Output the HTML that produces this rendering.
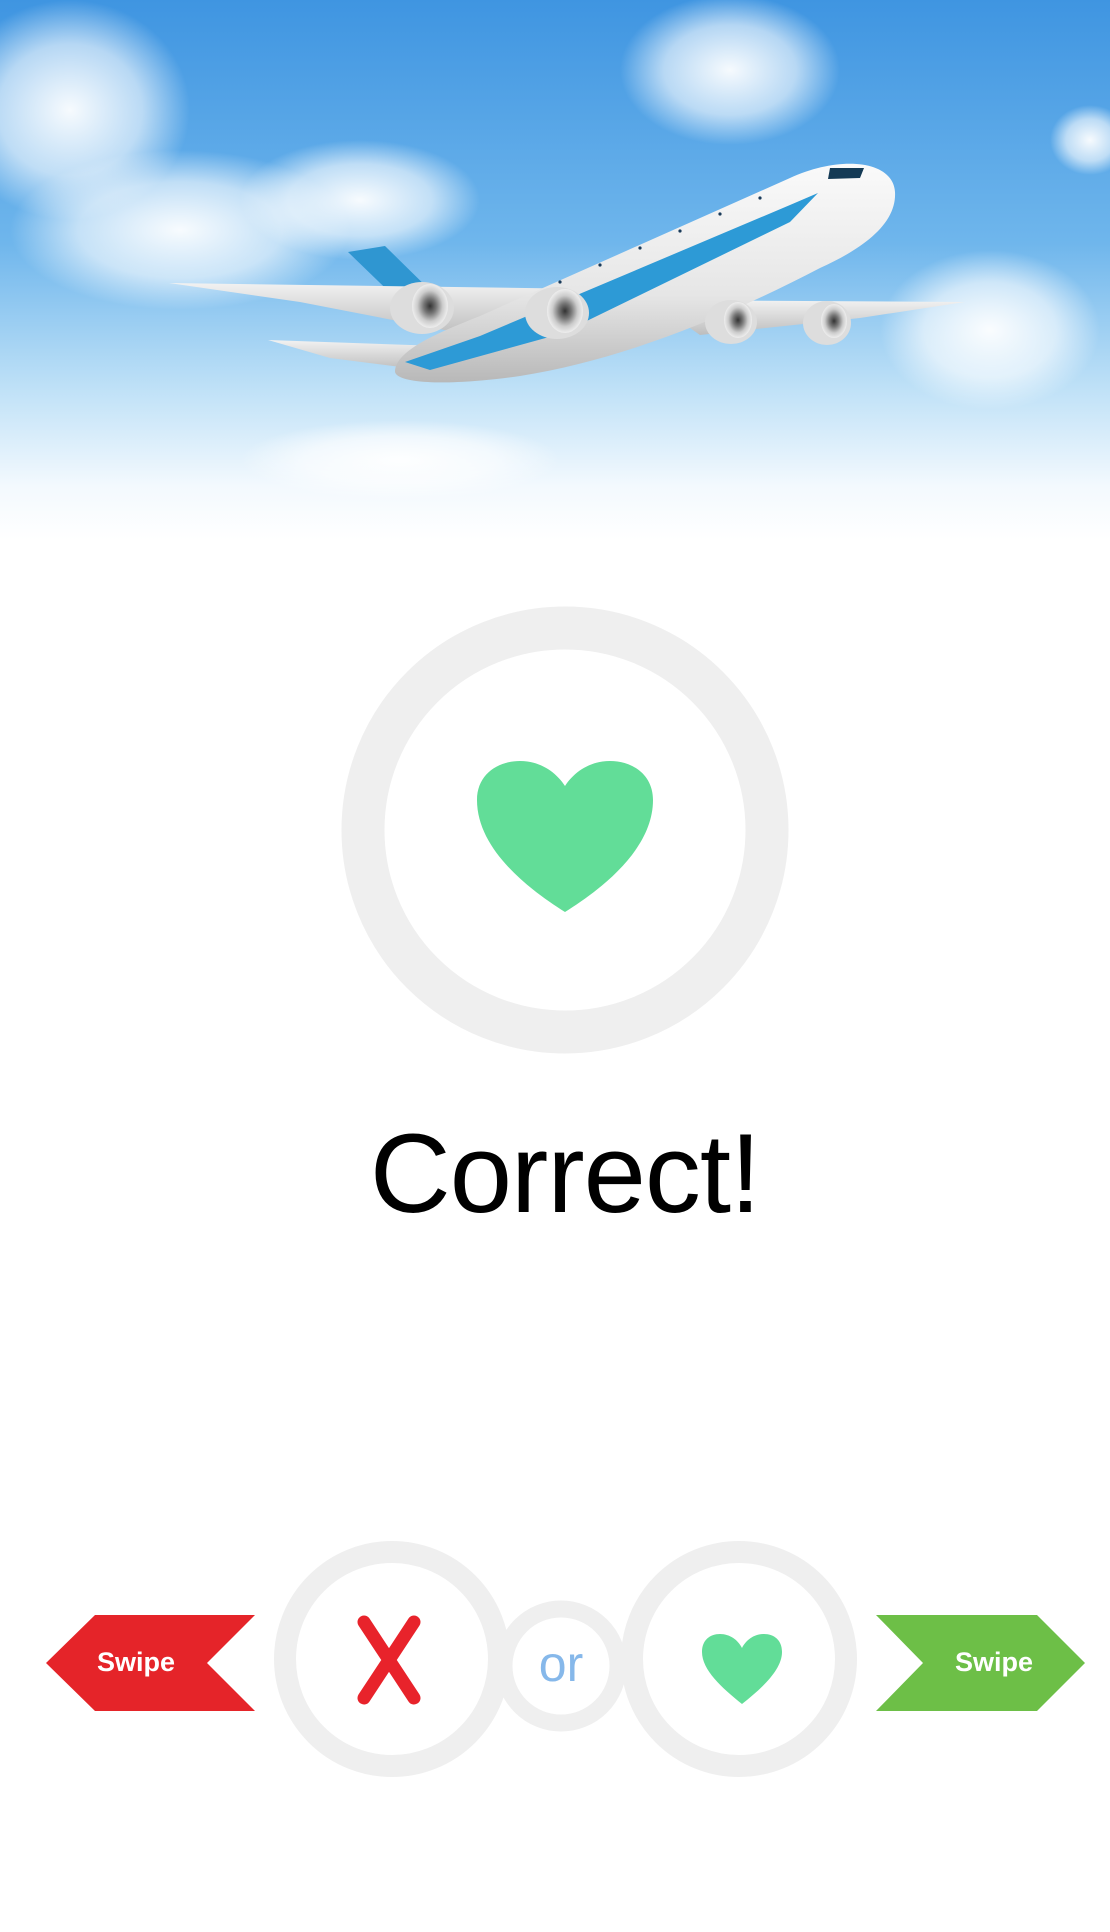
<!DOCTYPE html>
<html><head><meta charset="utf-8"><style>
html,body{margin:0;padding:0;background:#fff;}
body{width:1110px;height:1932px;position:relative;overflow:hidden;font-family:"Liberation Sans",sans-serif;}
svg{position:absolute;left:0;top:0;}
</style></head><body>
<svg width="1110" height="1932" viewBox="0 0 1110 1932">
<defs>
<linearGradient id="sky" x1="0" y1="0" x2="0" y2="1">
<stop offset="0" stop-color="#3f95e1"/>
<stop offset="0.45" stop-color="#6fb6ec"/>
<stop offset="0.72" stop-color="#bfe1f7"/>
<stop offset="0.9" stop-color="#f3f9fe"/>
<stop offset="1" stop-color="#ffffff"/>
</linearGradient>
<radialGradient id="cl"><stop offset="0" stop-color="#fff" stop-opacity="0.95"/><stop offset="0.6" stop-color="#fff" stop-opacity="0.6"/><stop offset="1" stop-color="#fff" stop-opacity="0"/></radialGradient>
<linearGradient id="fus" x1="0" y1="0" x2="0" y2="1"><stop offset="0" stop-color="#fafafa"/><stop offset="0.6" stop-color="#e6e6e6"/><stop offset="1" stop-color="#b8b8b8"/></linearGradient>
<linearGradient id="wing" x1="0" y1="0" x2="0" y2="1"><stop offset="0" stop-color="#f2f2f2"/><stop offset="1" stop-color="#bdbdbd"/></linearGradient>
<radialGradient id="eng"><stop offset="0" stop-color="#333"/><stop offset="0.35" stop-color="#777"/><stop offset="0.7" stop-color="#ccc"/><stop offset="1" stop-color="#eee"/></radialGradient>
</defs>
<rect x="0" y="0" width="1110" height="540" fill="url(#sky)"/>
<ellipse cx="70" cy="110" rx="120" ry="110" fill="url(#cl)"/>
<ellipse cx="180" cy="230" rx="170" ry="80" fill="url(#cl)"/>
<ellipse cx="360" cy="200" rx="120" ry="60" fill="url(#cl)"/>
<ellipse cx="730" cy="70" rx="110" ry="75" fill="url(#cl)"/>
<ellipse cx="990" cy="330" rx="110" ry="80" fill="url(#cl)"/>
<ellipse cx="1090" cy="140" rx="40" ry="35" fill="url(#cl)"/>
<ellipse cx="400" cy="460" rx="160" ry="40" fill="url(#cl)"/>
<!-- plane -->
<path d="M348 252 L385 246 L440 300 L410 312 Z" fill="#2f96d1"/>
<path d="M169 283 L665 290 L662 315 L470 335 L300 302 Z" fill="url(#wing)"/>
<path d="M650 300 L965 302 L860 318 L700 335 Z" fill="url(#wing)"/>
<path d="M268 340 L440 346 L425 370 L330 358 Z" fill="url(#wing)"/>
<path d="M395 372 C395 350 440 332 480 316 L790 178 C840 155 893 160 895 192 C897 225 860 250 820 268 C720 320 620 360 520 376 C450 386 398 384 395 372 Z" fill="url(#fus)"/>
<path d="M405 362 L480 336 L790 205 L818 193 L790 222 L560 334 L430 370 Z" fill="#2d9ad6"/>
<path d="M830 168 L864 168 L860 178 L828 179 Z" fill="#143a55"/>
<g fill="#1a3b5a"><circle cx="560" cy="282" r="1.6"/><circle cx="600" cy="265" r="1.6"/><circle cx="640" cy="248" r="1.6"/><circle cx="680" cy="231" r="1.6"/><circle cx="720" cy="214" r="1.6"/><circle cx="760" cy="198" r="1.6"/></g>
<ellipse cx="422" cy="308" rx="32" ry="26" fill="#ddd"/><ellipse cx="430" cy="306" rx="18" ry="22" fill="url(#eng)"/>
<ellipse cx="557" cy="313" rx="32" ry="26" fill="#ddd"/><ellipse cx="565" cy="311" rx="18" ry="22" fill="url(#eng)"/>
<ellipse cx="731" cy="322" rx="26" ry="22" fill="#ddd"/><ellipse cx="738" cy="320" rx="14" ry="18" fill="url(#eng)"/>
<ellipse cx="827" cy="323" rx="24" ry="22" fill="#ddd"/><ellipse cx="834" cy="321" rx="13" ry="17" fill="url(#eng)"/>
<circle cx="565" cy="830" r="202" fill="#fff" stroke="#efefef" stroke-width="43"/>
<path d="M565 912 C530 890 477 850 477 800 C477 775 497 761 520 761 C540 761 556 772 565 786 C574 772 590 761 610 761 C633 761 653 775 653 800 C653 850 600 890 565 912 Z" fill="#62dd98"/>
<text x="565" y="1212" text-anchor="middle" font-family="Liberation Sans, sans-serif" font-size="112" fill="#000" letter-spacing="-1">Correct!</text>
<polygon points="46,1663 95,1615 255,1615 207,1663 255,1711 95,1711" fill="#e52429"/>
<text x="136" y="1671" text-anchor="middle" font-family="Liberation Sans, sans-serif" font-weight="bold" font-size="27" fill="#fff">Swipe</text>
<polygon points="876,1615 1037,1615 1085,1663 1037,1711 876,1711 923,1663" fill="#6dbf47"/>
<text x="994" y="1671" text-anchor="middle" font-family="Liberation Sans, sans-serif" font-weight="bold" font-size="27" fill="#fff">Swipe</text>
<circle cx="392" cy="1659" r="107" fill="#fff" stroke="#efefef" stroke-width="22"/>
<circle cx="739" cy="1659" r="107" fill="#fff" stroke="#efefef" stroke-width="22"/>
<circle cx="561" cy="1666" r="57" fill="#fff" stroke="#efefef" stroke-width="17"/>
<path d="M364 1622 L414 1698 M414 1622 L364 1698" stroke="#e8232b" stroke-width="13" stroke-linecap="round"/>
<text x="561" y="1681" text-anchor="middle" font-family="Liberation Sans, sans-serif" font-size="50" fill="#86b8ea">or</text>
<path d="M742 1704 C722 1688 702 1670 702 1652 C702 1640 710 1634 720 1634 C730 1634 738 1640 742 1648 C746 1640 754 1634 764 1634 C774 1634 782 1640 782 1652 C782 1670 762 1688 742 1704 Z" fill="#62dd98"/>
</svg>
</body></html>
